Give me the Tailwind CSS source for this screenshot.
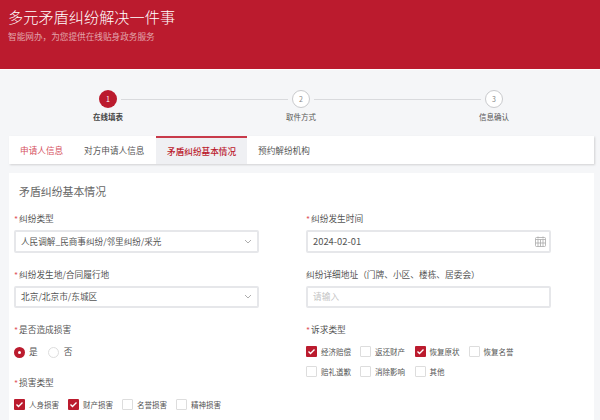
<!DOCTYPE html>
<html lang="zh-CN">
<head>
    <meta charset="UTF-8">
    <title>多元矛盾纠纷解决一件事</title>
    <script src="https://cdn.jsdelivr.net/npm/@tailwindcss/browser@4"></script>
</head>
<body class="w-[600px] h-[420px] overflow-hidden bg-[#f5f6f8] font-['Noto_Sans_CJK_SC','Noto_Sans',sans-serif] text-[#555]">
    <!-- banner -->
    <header class="h-[69px] bg-[#bb1b2e] pl-2 pt-[5px]">
        <h1 class="text-[15.2px] leading-[22px] text-white font-light">多元矛盾纠纷解决一件事</h1>
        <p class="mt-[3px] text-[8.65px] leading-[12px] text-white/60">智能网办，为您提供在线贴身政务服务</p>
    </header>
    <div class="h-px bg-white"></div>

    <!-- steps -->
    <div class="h-[66px] pt-5 pl-[99px] flex">
        <div class="flex flex-col items-center w-[18px]">
            <div class="w-[18px] h-[18px] shrink-0 rounded-full bg-[#bb1b2e] text-white text-[7px] flex items-center justify-center">1</div>
            <div class="mt-[3px] text-[7.5px] leading-[12px] font-bold whitespace-nowrap text-[#444]">在线填表</div>
        </div>
        <div class="w-[167px] h-px bg-[#d9dadd] mt-[9px] mx-1"></div>
        <div class="flex flex-col items-center w-[18px]">
            <div class="w-[18px] h-[18px] shrink-0 rounded-full border border-[#c9cacd] bg-white text-[#888] text-[7px] flex items-center justify-center">2</div>
            <div class="mt-[3px] text-[7.5px] leading-[12px] whitespace-nowrap">取件方式</div>
        </div>
        <div class="w-[167px] h-px bg-[#d9dadd] mt-[9px] mx-1"></div>
        <div class="flex flex-col items-center w-[18px]">
            <div class="w-[18px] h-[18px] shrink-0 rounded-full border border-[#c9cacd] bg-white text-[#888] text-[7px] flex items-center justify-center">3</div>
            <div class="mt-[3px] text-[7.5px] leading-[12px] whitespace-nowrap">信息确认</div>
        </div>
    </div>

    <!-- tabs -->
    <nav class="ml-[9px] w-[585px] h-[28px] bg-white flex text-[8.65px] shadow-[1px_1px_2px_rgba(0,0,0,0.15)]">
        <a class="w-[65px] pl-[11px] leading-[28px] text-[#d5505e]">申请人信息</a>
        <a class="w-[82px] pl-[10px] leading-[28px]">对方申请人信息</a>
        <a class="w-[91px] pl-[11px] leading-[26px] bg-[#eff0f3] border-t-2 border-[#c83a4a] text-[#bb1b2e] font-medium">矛盾纠纷基本情况</a>
        <a class="pl-[11px] leading-[28px]">预约解纷机构</a>
    </nav>

    <!-- form card -->
    <main class="ml-[9px] mt-[9px] w-[585px] h-[247px] bg-white">
        <h2 class="pl-[10px] pt-[10px] text-[10.9px] leading-[16px] text-[#666]">矛盾纠纷基本情况</h2>

        <div class="mt-[13px] pl-[5px] grid grid-cols-[245px_245px] gap-x-[47px] text-[8.7px]">
            <div class="h-[55.5px]">
                <label class="block leading-[13px]"><span class="text-[#e0555f] inline-block w-[5px] translate-y-px">*</span>纠纷类型</label>
                <div class="mt-[5px] h-[22.5px] border-2 border-[#e6e7ea] rounded-[2px] flex items-center justify-between px-[5px]">
                    <span class="text-[8.6px]">人民调解_民商事纠纷/邻里纠纷/采光</span>
                    <svg class="w-[8px] h-[5px]" viewBox="0 0 8 5" fill="none" stroke="#999" stroke-width="0.8"><path d="M1 1l3 3 3-3"/></svg>
                </div>
            </div>
            <div class="h-[55.5px]">
                <label class="block leading-[13px]"><span class="text-[#e0555f] inline-block w-[5px] translate-y-px">*</span>纠纷发生时间</label>
                <div class="mt-[5px] h-[22.5px] border-2 border-[#e6e7ea] rounded-[2px] flex items-center justify-between pl-[5px] pr-[3px]">
                    <span class="text-[9.4px]">2024-02-01</span>
                    <svg class="w-[11px] h-[11px]" viewBox="0 0 11 11" fill="none" stroke="#aaa" stroke-width="0.8"><rect x="0.5" y="1.5" width="10" height="9" rx="1"/><path d="M0.5 3.5h10M3 0.5v2M8 0.5v2M3 3.5v7M5.5 3.5v7M8 3.5v7M0.5 7h10"/></svg>
                </div>
            </div>
            <div class="h-[55.5px]">
                <label class="block leading-[13px]"><span class="text-[#e0555f] inline-block w-[5px] translate-y-px">*</span>纠纷发生地/合同履行地</label>
                <div class="mt-[5px] h-[22.5px] border-2 border-[#e6e7ea] rounded-[2px] flex items-center justify-between px-[5px]">
                    <span>北京/北京市/东城区</span>
                    <svg class="w-[8px] h-[5px]" viewBox="0 0 8 5" fill="none" stroke="#999" stroke-width="0.8"><path d="M1 1l3 3 3-3"/></svg>
                </div>
            </div>
            <div class="h-[55.5px]">
                <label class="block leading-[13px]">纠纷详细地址（门牌、小区、楼栋、居委会）</label>
                <div class="mt-[5px] h-[22.5px] border-2 border-[#e6e7ea] rounded-[2px] flex items-center pl-[5px] text-[#c4c4c4]">请输入</div>
            </div>
            <div>
                <label class="block leading-[13px]"><span class="text-[#e0555f] inline-block w-[5px] translate-y-px">*</span>是否造成损害</label>
                <div class="mt-[10px] h-[12px] flex items-center">
                    <span class="w-[11px] h-[11px] rounded-full bg-[#bb1b2e] flex items-center justify-center"><span class="w-[3px] h-[3px] rounded-full bg-white"></span></span>
                    <span class="ml-1">是</span>
                    <span class="ml-[10px] w-[11px] h-[11px] rounded-full border border-[#ddd]"></span>
                    <span class="ml-[5px]">否</span>
                </div>
                <label class="block mt-[18px] leading-[13px]"><span class="text-[#e0555f] inline-block w-[5px] translate-y-px">*</span>损害类型</label>
                <div class="mt-[10px] flex text-[7.5px]">
                    <div class="w-[54px] flex items-center gap-[4px]"><svg class="w-[11px] h-[11px]" viewBox="0 0 11 11"><rect width="11" height="11" rx="1" fill="#bb1b2e"/><path d="M2.5 5.5l2 2 4-4" fill="none" stroke="#fff" stroke-width="1.4"/></svg>人身损害</div>
                    <div class="w-[54px] flex items-center gap-[4px]"><svg class="w-[11px] h-[11px]" viewBox="0 0 11 11"><rect width="11" height="11" rx="1" fill="#bb1b2e"/><path d="M2.5 5.5l2 2 4-4" fill="none" stroke="#fff" stroke-width="1.4"/></svg>财产损害</div>
                    <div class="w-[54px] flex items-center gap-[4px]"><span class="w-[11px] h-[11px] border border-[#ddd] rounded-[1px]"></span>名誉损害</div>
                    <div class="w-[54px] flex items-center gap-[4px]"><span class="w-[11px] h-[11px] border border-[#ddd] rounded-[1px]"></span>精神损害</div>
                </div>
            </div>
            <div>
                <label class="block leading-[13px]"><span class="text-[#e0555f] inline-block w-[5px] translate-y-px">*</span>诉求类型</label>
                <div class="mt-[10px] grid grid-cols-[54px_54.5px_54px_54px] gap-y-[8.5px] text-[7.5px] leading-[11px]">
                    <div class="flex items-center gap-[4px]"><svg class="w-[11px] h-[11px]" viewBox="0 0 11 11"><rect width="11" height="11" rx="1" fill="#bb1b2e"/><path d="M2.5 5.5l2 2 4-4" fill="none" stroke="#fff" stroke-width="1.4"/></svg>经济赔偿</div>
                    <div class="flex items-center gap-[4px]"><span class="w-[11px] h-[11px] border border-[#ddd] rounded-[1px]"></span>返还财产</div>
                    <div class="flex items-center gap-[4px]"><svg class="w-[11px] h-[11px]" viewBox="0 0 11 11"><rect width="11" height="11" rx="1" fill="#bb1b2e"/><path d="M2.5 5.5l2 2 4-4" fill="none" stroke="#fff" stroke-width="1.4"/></svg>恢复原状</div>
                    <div class="flex items-center gap-[4px]"><span class="w-[11px] h-[11px] border border-[#ddd] rounded-[1px]"></span>恢复名誉</div>
                    <div class="flex items-center gap-[4px]"><span class="w-[11px] h-[11px] border border-[#ddd] rounded-[1px]"></span>赔礼道歉</div>
                    <div class="flex items-center gap-[4px]"><span class="w-[11px] h-[11px] border border-[#ddd] rounded-[1px]"></span>消除影响</div>
                    <div class="flex items-center gap-[4px]"><span class="w-[11px] h-[11px] border border-[#ddd] rounded-[1px]"></span>其他</div>
                </div>
            </div>
        </div>
    </main>
</body>
</html>
